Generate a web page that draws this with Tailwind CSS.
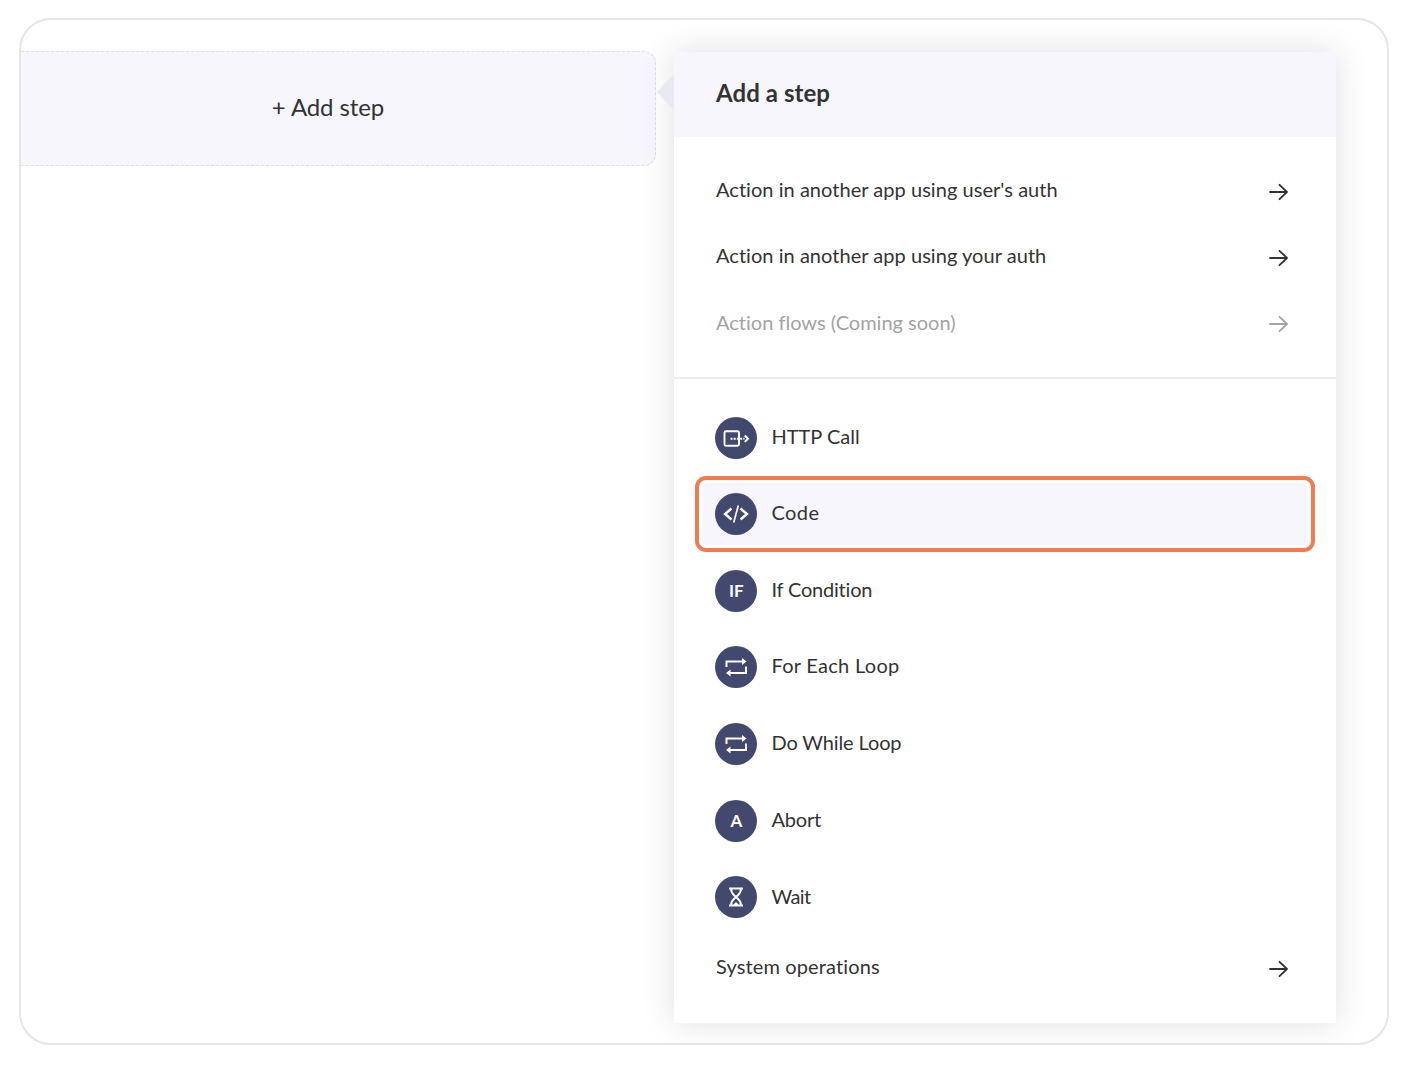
<!DOCTYPE html>
<html lang="en">
<head>
<meta charset="utf-8">
<title>Add a step</title>
<script src="https://cdn.jsdelivr.net/npm/@tailwindcss/browser@4"></script>
</head>
<body class="bg-white font-['Lato',sans-serif] text-[#333] h-[1068px] overflow-hidden pt-[18px] pl-[19px] [font-variant-ligatures:none]">
<svg class="hidden">
  <symbol id="arrow" viewBox="0 0 20 18"><path d="M1 9h17M10.500 1.800L18 9l-7.500 7.200" fill="none" stroke="currentColor" stroke-width="1.800" stroke-linecap="round" stroke-linejoin="round"/></symbol>
  <symbol id="loop" viewBox="0 0 42 42"><path d="M11.500 21v-5.500h16M31 20.500v6.500h-16" fill="none" stroke="#fff" stroke-width="2"/><path d="M27 12l4.500 3.500-4.500 3.500zM15.500 23.500L11 27l4.500 3.500z" fill="#fff"/></symbol>
</svg>
<main class="w-[1370px] h-[1027px] border-2 border-[#e5e5eb] rounded-[32px] overflow-hidden flex items-start pt-[31px]">
  <div class="w-[647px] -ml-3 h-[115px] shrink-0 rounded-xl border border-dashed border-[#dedee9] bg-[#f6f6fc] flex items-center justify-center pr-[9px] pb-[3px]">
    <span class="text-2xl leading-7 tracking-[-0.1px]">+ Add step</span>
  </div>
  <section class="relative ml-[18px] mt-[1px] w-[662px] h-[971px] shrink-0 bg-white shadow-[0_0_32px_rgba(0,0,0,0.13)]">
    <svg class="absolute -left-[17px] top-[22px] w-[17px] h-[36px]" viewBox="0 0 17 36"><path d="M17 0v36L0 18z" fill="#e9e9f2"/></svg>
    <header class="h-[85px] bg-[#f6f6fc] px-[42px] pb-[3px] flex items-center"><h1 class="text-2xl font-bold tracking-[0.07px]">Add a step</h1></header>
    <ul class="h-[242px] pt-[21px] pl-[42px] pr-[47px] border-b-2 border-[#ededef] text-xl">
      <li class="h-[66px] flex items-center justify-between"><span class="pb-[4px] tracking-[0.04px]">Action in another app using user's auth</span><svg class="w-5 h-[18px] mt-[2px]"><use href="#arrow"/></svg></li>
      <li class="h-[66px] flex items-center justify-between"><span class="pb-[4px] tracking-[0.04px]">Action in another app using your auth</span><svg class="w-5 h-[18px] mt-[2px]"><use href="#arrow"/></svg></li>
      <li class="h-[66px] flex items-center justify-between text-[#a3a3a3]"><span class="pb-[2px]">Action flows (Coming soon)</span><svg class="w-5 h-[18px] mt-[2px]"><use href="#arrow"/></svg></li>
    </ul>
    <ul class="pt-[20.300px] px-[21px] text-xl">
      <li class="h-[76.600px] pl-[20.300px] flex items-center gap-[14.200px]">
        <svg class="size-[42px]" viewBox="0 0 42 42"><circle cx="21" cy="21" r="21" fill="#43486e"/><g fill="none" stroke="#fff"><rect x="9.500" y="14.300" width="14.500" height="14.500" rx="1.500" stroke-width="1.900"/><path d="M15.500 21.700h14" stroke-width="1.900" stroke-dasharray="2 1.200"/><path d="M29.800 18.500l3.200 3.200-3.200 3.200" stroke-width="2"/></g></svg>
        <span class="pb-[3px]">HTTP Call</span></li>
      <li class="h-[76px] mb-[0.600px] flex">
        <div class="w-full border-4 border-[#f07d51] rounded-[11px] p-[3px] flex">
          <div class="w-full bg-[#f6f6fc] rounded-md pl-[13.300px] flex items-center gap-[14.200px]">
            <svg class="size-[42px]" viewBox="0 0 42 42"><circle cx="21" cy="21" r="21" fill="#43486e"/><path d="M16.500 15.500L10 21l6.500 5.500M25.500 15.500L32 21l-6.500 5.500" fill="none" stroke="#fff" stroke-width="2.400"/><path d="M23.300 12.500l-4.600 17" stroke="#fff" stroke-width="1.700"/></svg>
            <span class="pb-[3px] tracking-[0.4px]">Code</span>
          </div>
        </div></li>
      <li class="h-[76.600px] pl-[20.300px] flex items-center gap-[14.200px]">
        <span class="size-[42px] rounded-full bg-[#43486e] text-white text-[17px] font-bold flex items-center justify-center">IF</span>
        <span class="pb-[3px] tracking-[-0.2px]">If Condition</span></li>
      <li class="h-[76.600px] pl-[20.300px] flex items-center gap-[14.200px]">
        <span class="size-[42px] rounded-full bg-[#43486e]"><svg class="size-[42px]"><use href="#loop"/></svg></span>
        <span class="pb-[4px] tracking-[0.28px]">For Each Loop</span></li>
      <li class="h-[76.600px] pl-[20.300px] flex items-center gap-[14.200px]">
        <span class="size-[42px] rounded-full bg-[#43486e]"><svg class="size-[42px]"><use href="#loop"/></svg></span>
        <span class="pb-[4px] tracking-[-0.13px]">Do While Loop</span></li>
      <li class="h-[76.600px] pl-[20.300px] flex items-center gap-[14.200px]">
        <span class="size-[42px] rounded-full bg-[#43486e] text-white text-[17px] font-bold flex items-center justify-center">A</span>
        <span class="pb-[4px] tracking-[-0.2px]">Abort</span></li>
      <li class="h-[76.600px] pl-[20.300px] flex items-center gap-[14.200px]">
        <svg class="size-[42px]" viewBox="0 0 42 42"><circle cx="21" cy="21" r="21" fill="#43486e"/><path d="M14 12.500h14M14 29.500h14M16 12.500c0 5 2 5.500 5 8.500 3-3 5-3.500 5-8.500M16 29.500c0-5 2-5.500 5-8.500 3 3 5 3.500 5 8.500" fill="none" stroke="#fff" stroke-width="1.900"/><path d="M18 29l3-3 3 3z" fill="#fff"/></svg>
        <span class="pb-[3px] tracking-[-0.6px]">Wait</span></li>
      <li class="h-[66px] pl-[21px] pr-[26px] flex items-center justify-between"><span class="pb-[4px] tracking-[0.13px]">System operations</span><svg class="w-5 h-[18px] mt-[2px]"><use href="#arrow"/></svg></li>
    </ul>
  </section>
</main>
</body>
</html>
